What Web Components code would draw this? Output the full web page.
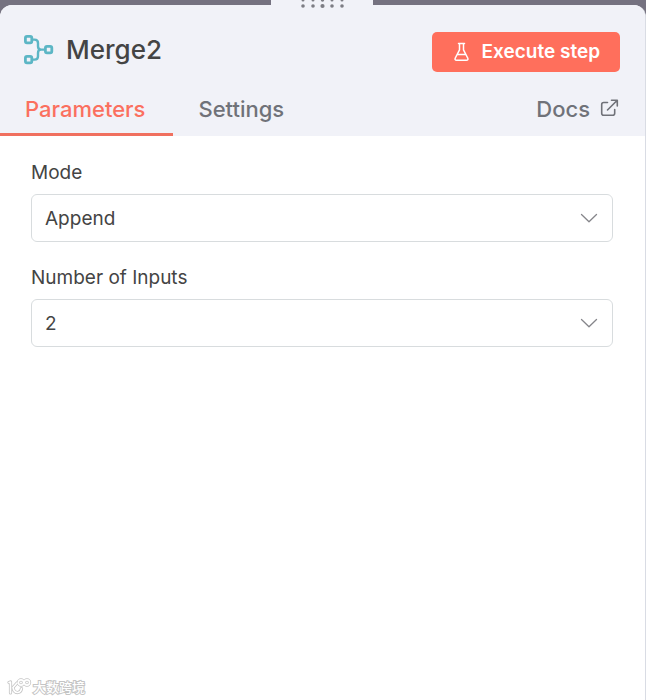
<!DOCTYPE html>
<html lang="en">
<head>
<meta charset="utf-8">
<title>Merge2</title>
<style>
html, body { margin: 0; height: 100%; }
body { background: #757280; font-family: Inter, "Noto Sans CJK SC", sans-serif; color: #444; }
</style>
</head>
<body>
<node-panel></node-panel>
<script>
const define = (name, html, setup) => {
  const template = document.createElement('template');
  template.innerHTML = html;
  customElements.define(name, class extends HTMLElement {
    constructor() {
      super();
      this.attachShadow({ mode: 'open' }).append(template.content.cloneNode(true));
    }
    connectedCallback() { if (setup) setup(this, this.shadowRoot); }
  });
};

define('drag-handle', `
<style>
:host { display: block; width: 102px; height: 12px; background: #f1f2f8; }
svg { display: block; margin: auto; }
</style>
<svg width="46" height="12" fill="#7d7d84" aria-hidden="true">
  <g><circle cx="4" cy="0" r="1.5"/><circle cx="14" cy="0" r="1.5"/><circle cx="23.500" cy="0" r="1.700"/><circle cx="33" cy="0" r="1.500"/><circle cx="43" cy="0" r="1.500"/></g>
  <g><circle cx="4" cy="6" r="1.800"/><circle cx="14" cy="6" r="1.800"/><circle cx="23.500" cy="6" r="2.100"/><circle cx="33" cy="6" r="1.800"/><circle cx="43" cy="6" r="1.800"/></g>
</svg>`);

define('execute-button', `
<style>
:host { display: block; }
button { display: flex; align-items: center; gap: 11px; height: 40px; padding: 0 20px; border: 0; border-radius: 5px; background: #ff6f5c; color: #fff; font: 600 19px/24px Inter, sans-serif; cursor: pointer; }
svg { display: block; }
</style>
<button type="button">
  <svg width="19" height="20" viewBox="0 0 19 20" fill="none" stroke="#fff" stroke-width="1.500" stroke-linecap="round" stroke-linejoin="round" aria-hidden="true">
    <path d="M6.500 1.500h6M7.500 1.700v6.100L3.300 16Q2.300 18.300 4.700 18.300h9.600Q16.700 18.300 15.700 16L11.500 7.800V1.700M5.200 12.600h8.600"/>
  </svg>
  <slot></slot>
</button>`);

define('node-title', `
<style>
:host { display: flex; align-items: center; gap: 12px; }
svg { display: block; }
h1 { margin: 0; font-size: 26px; line-height: 36px; font-weight: 450; }
</style>
<svg width="30" height="30" viewBox="0 0 30 30" fill="none" stroke="#5cb6c5" stroke-width="2.800" aria-hidden="true">
  <rect x="1.400" y="1.400" width="6.400" height="6.400" rx="1.600"/>
  <rect x="1.400" y="21.400" width="6.400" height="6.400" rx="1.600"/>
  <rect x="21.400" y="11.400" width="6.400" height="6.400" rx="1.600"/>
  <path stroke-width="2.400" d="M8 4.600h2.500Q14 4.600 14 8v3.300Q14 14.600 17 14.600h4.500M8 24.600h2.500Q14 24.600 14 21.200v-3.300Q14 14.600 17 14.600"/>
</svg>
<h1><slot></slot></h1>`);

define('panel-tabs', `
<style>
:host { display: flex; justify-content: space-between; align-items: stretch; height: 50px; padding-right: 26px; font-size: 22px; line-height: 28px; font-weight: 500; color: #707279; }
div { display: flex; }
button { box-sizing: border-box; border: 0; border-bottom: 3px solid transparent; padding: 0 28px 2px 25px; background: none; font: inherit; color: inherit; cursor: pointer; }
button[aria-selected="true"] { color: #fb705f; border-color: #f0705f; }
a { display: flex; align-items: center; gap: 10px; color: inherit; text-decoration: none; padding-bottom: 5px; }
svg { display: block; }
</style>
<div role="tablist">
  <button type="button" role="tab" aria-selected="true">Parameters</button>
  <button type="button" role="tab" aria-selected="false">Settings</button>
</div>
<a href="#docs">Docs
  <svg width="19" height="20" viewBox="0 0 19 20" fill="none" stroke="currentColor" stroke-width="1.600" stroke-linecap="round" stroke-linejoin="round" aria-hidden="true">
    <path d="M7.500 3.500H3.700Q1.700 3.500 1.700 5.500v8.800Q1.700 16.300 3.700 16.300h9Q14.700 16.300 14.700 14.300v-3.800M11.500 1.200h5.800V7M17 1.500 7.500 11"/>
  </svg>
</a>`);

define('select-field', `
<style>
:host { display: flex; flex-direction: column; gap: 9px; font-size: 19px; line-height: 24px; }
div { display: grid; align-items: center; }
select, svg { grid-area: 1 / 1; }
select { appearance: none; box-sizing: border-box; width: 100%; height: 48px; margin: 0; padding: 2px 48px 0 13px; border: 1px solid #d8dcde; border-radius: 6px; background: #fff; color: inherit; font: inherit; }
svg { justify-self: end; margin-right: 15px; pointer-events: none; }
</style>
<label for="choice"></label>
<div>
  <select id="choice"></select>
  <svg width="18" height="18" fill="none" stroke="#86868b" stroke-width="1.300" stroke-linecap="round" stroke-linejoin="round" aria-hidden="true"><path d="M1.500 5.500 9 12.700 16.500 5.500"/></svg>
</div>`, (host, root) => {
  root.querySelector('label').textContent = host.getAttribute('label');
  root.querySelector('select').replaceChildren(new Option(host.getAttribute('value')));
});

define('brand-mark', `
<style>
:host { display: flex; align-items: center; gap: 1px; font-size: 13px; line-height: 16px; font-weight: 500; color: #fff; -webkit-text-stroke: 2px #c5c5c5; paint-order: stroke fill; }
svg { display: block; }
</style>
<svg width="25" height="18" viewBox="0 0 25 18" fill="none" stroke-linecap="round" stroke-linejoin="round" aria-hidden="true">
  <g stroke="#c5c5c5" stroke-width="3.200"><path d="M2 4.500 3.500 4v11M10 5 6 9.500q1 5.500 5 5 3-.5 3.500-4"/><circle cx="14" cy="4.500" r="2.600"/><circle cx="20" cy="4.500" r="2.600"/></g>
  <g stroke="#fff" stroke-width="1.600"><path d="M2 4.500 3.500 4v11M10 5 6 9.500q1 5.500 5 5 3-.5 3.500-4"/><circle cx="14" cy="4.500" r="2.600"/><circle cx="20" cy="4.500" r="2.600"/></g>
</svg>
<span><slot></slot></span>`);

define('node-panel', `
<style>
:host { display: flex; box-sizing: border-box; min-height: 100%; padding-top: 5px; position: relative; }
drag-handle { position: absolute; top: 0; left: calc(50% - 52px); }
section { flex: 1; display: flex; flex-direction: column; min-width: 0; overflow: hidden; border-right: 1px solid #d9dce4; border-radius: 12px 12px 0 0; background: #fff; }
header { background: #f1f2f8; }
.top { display: flex; align-items: flex-start; justify-content: space-between; padding: 27px 25px 14px 24px; }
main { flex: 1; display: flex; flex-direction: column; gap: 24px; padding: 25px 32px 25px 31px; }
footer { padding: 0 7px 4px; }
</style>
<section>
  <header>
    <div class="top"><node-title>Merge2</node-title><execute-button>Execute step</execute-button></div>
    <panel-tabs></panel-tabs>
  </header>
  <main>
    <select-field label="Mode" value="Append"></select-field>
    <select-field label="Number of Inputs" value="2"></select-field>
  </main>
  <footer><brand-mark>大数跨境</brand-mark></footer>
</section>
<drag-handle></drag-handle>`);
</script>
</body>
</html>
